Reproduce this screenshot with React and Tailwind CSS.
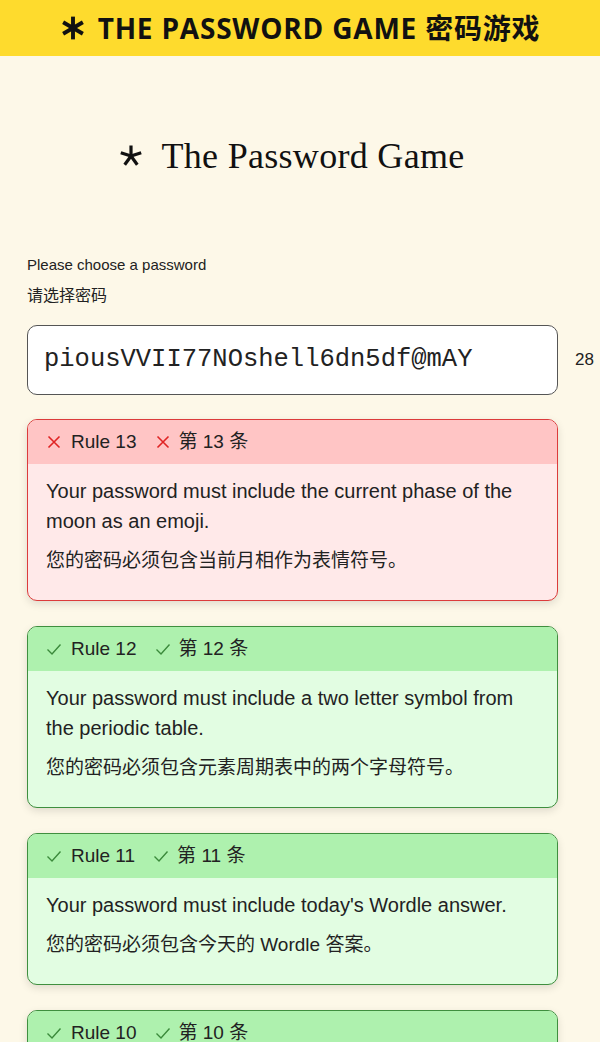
import React from "react";

const sans = { fontFamily: '"Liberation Sans", "Noto Sans CJK SC", Arial, sans-serif' };

function HeavyStar({ className }) {
  return (
    <svg viewBox="0 0 24 24" className={className} fill="none" stroke="currentColor" strokeWidth="3.6" strokeLinecap="butt">
      <path d="M12 1.5v21" />
      <path d="M2.9 6.75l18.2 10.5" />
      <path d="M2.9 17.25l18.2-10.5" />
    </svg>
  );
}

function ThinStar({ className }) {
  return (
    <svg viewBox="0 0 24 24" className={className} fill="none" stroke="currentColor" strokeWidth="3.2" strokeLinecap="butt">
      <path d="M12 1.5v10.5" />
      <path d="M12 12L1.8 8.7" />
      <path d="M12 12l10.2-3.3" />
      <path d="M12 12l-6.3 8.7" />
      <path d="M12 12l6.3 8.7" />
    </svg>
  );
}

function Cross({ className }) {
  return (
    <svg viewBox="0 0 16 16" className={className} fill="none" stroke="currentColor" strokeWidth="1.6">
      <path d="M2.5 2.5l11 11M13.5 2.5l-11 11" />
    </svg>
  );
}

function Tick({ className }) {
  return (
    <svg viewBox="0 0 16 16" className={className} fill="none" stroke="currentColor" strokeWidth="1.4">
      <path d="M1.5 8.5l4.5 4.5 8.5-9.5" />
    </svg>
  );
}

const rules = [
  {
    n: 13,
    ok: false,
    en: "Your password must include the current phase of the moon as an emoji.",
    zh: "您的密码必须包含当前月相作为表情符号。",
  },
  {
    n: 12,
    ok: true,
    en: "Your password must include a two letter symbol from the periodic table.",
    zh: "您的密码必须包含元素周期表中的两个字母符号。",
  },
  {
    n: 11,
    ok: true,
    en: "Your password must include today's Wordle answer.",
    zh: "您的密码必须包含今天的 Wordle 答案。",
  },
  {
    n: 10,
    ok: true,
    en: "Your password must include the answer to this captcha.",
    zh: "您的密码必须包含此验证码的答案。",
  },
];

function RuleCard({ rule }) {
  const Icon = rule.ok ? Tick : Cross;
  return (
    <div
      className={
        rule.ok
          ? "w-[531px] rounded-[10px] border border-[#3f8f3f] bg-[#e2fde2] overflow-hidden shadow-[0_3px_8px_rgba(0,0,0,0.12)]"
          : "w-[531px] rounded-[10px] border border-[#dc3b3b] bg-[#ffe9e9] overflow-hidden shadow-[0_3px_8px_rgba(0,0,0,0.12)]"
      }
    >
      <div
        className={
          rule.ok
            ? "h-[44px] flex items-center pl-[18px] text-[19px] text-[#222] bg-[#aef1ae]"
            : "h-[44px] flex items-center pl-[18px] text-[19px] text-[#222] bg-[#ffc5c5]"
        }
      >
        <Icon className={rule.ok ? "w-[16px] h-[16px] text-[#3b8a3b]" : "w-[16px] h-[16px] text-[#e02424]"} />
        <span className="ml-[9px]">Rule {rule.n}</span>
        <Icon className={rule.ok ? "ml-[18px] w-[16px] h-[16px] text-[#3b8a3b]" : "ml-[18px] w-[16px] h-[16px] text-[#e02424]"} />
        <span className="ml-[8px]">第 {rule.n} 条</span>
      </div>
      <div className="px-[18px] pt-[12px] pb-[24px] text-[20px] text-[#222]">
        <p className="leading-[30px]">{rule.en}</p>
        <p className="mt-[10px] text-[19px] leading-[30px]">{rule.zh}</p>
      </div>
    </div>
  );
}

export default function App() {
  return (
    <div className="min-h-screen bg-[#fdf8e8]" style={sans}>
      <header
        className="h-[56px] bg-[#fedb2d] flex items-center justify-center gap-[12px] text-[#111]"
        style={{ fontFamily: '"Open Sans", "Noto Sans CJK SC", sans-serif' }}
      >
        <HeavyStar className="w-[26px] h-[26px]" />
        <span className="text-[28px] font-bold tracking-[0.8px]">THE PASSWORD GAME 密码游戏</span>
      </header>

      <div className="pt-[78px] pr-[16px] flex items-center justify-center gap-[18px] text-[#111]">
        <ThinStar className="w-[24px] h-[24px]" />
        <h1
          className="text-[36px] leading-[44px] tracking-[0.3px]"
          style={{ fontFamily: '"Liberation Serif", "Times New Roman", serif' }}
        >
          The Password Game
        </h1>
      </div>

      <main className="pl-[27px] pt-[77px]">
        <p className="text-[15px] leading-[20px] text-[#222]">Please choose a password</p>
        <p className="mt-[11px] text-[16px] leading-[20px] text-[#222]">请选择密码</p>

        <div className="mt-[19px] flex items-center">
          <div className="w-[531px] h-[70px] shrink-0 rounded-[10px] border border-[#555] bg-white flex items-center px-[16px]">
            <span
              className="text-[25.5px] text-[#222]"
              style={{ fontFamily: '"Liberation Mono", "Courier New", monospace' }}
            >
              piousVVII77NOshell6dn5df@mAY
            </span>
          </div>
          <span className="ml-[17px] text-[17px] text-[#222]">28</span>
        </div>

        <div className="mt-[24px] flex flex-col gap-[25px] pb-[30px]">
          {rules.map((r) => (
            <RuleCard key={r.n} rule={r} />
          ))}
        </div>
      </main>
    </div>
  );
}
